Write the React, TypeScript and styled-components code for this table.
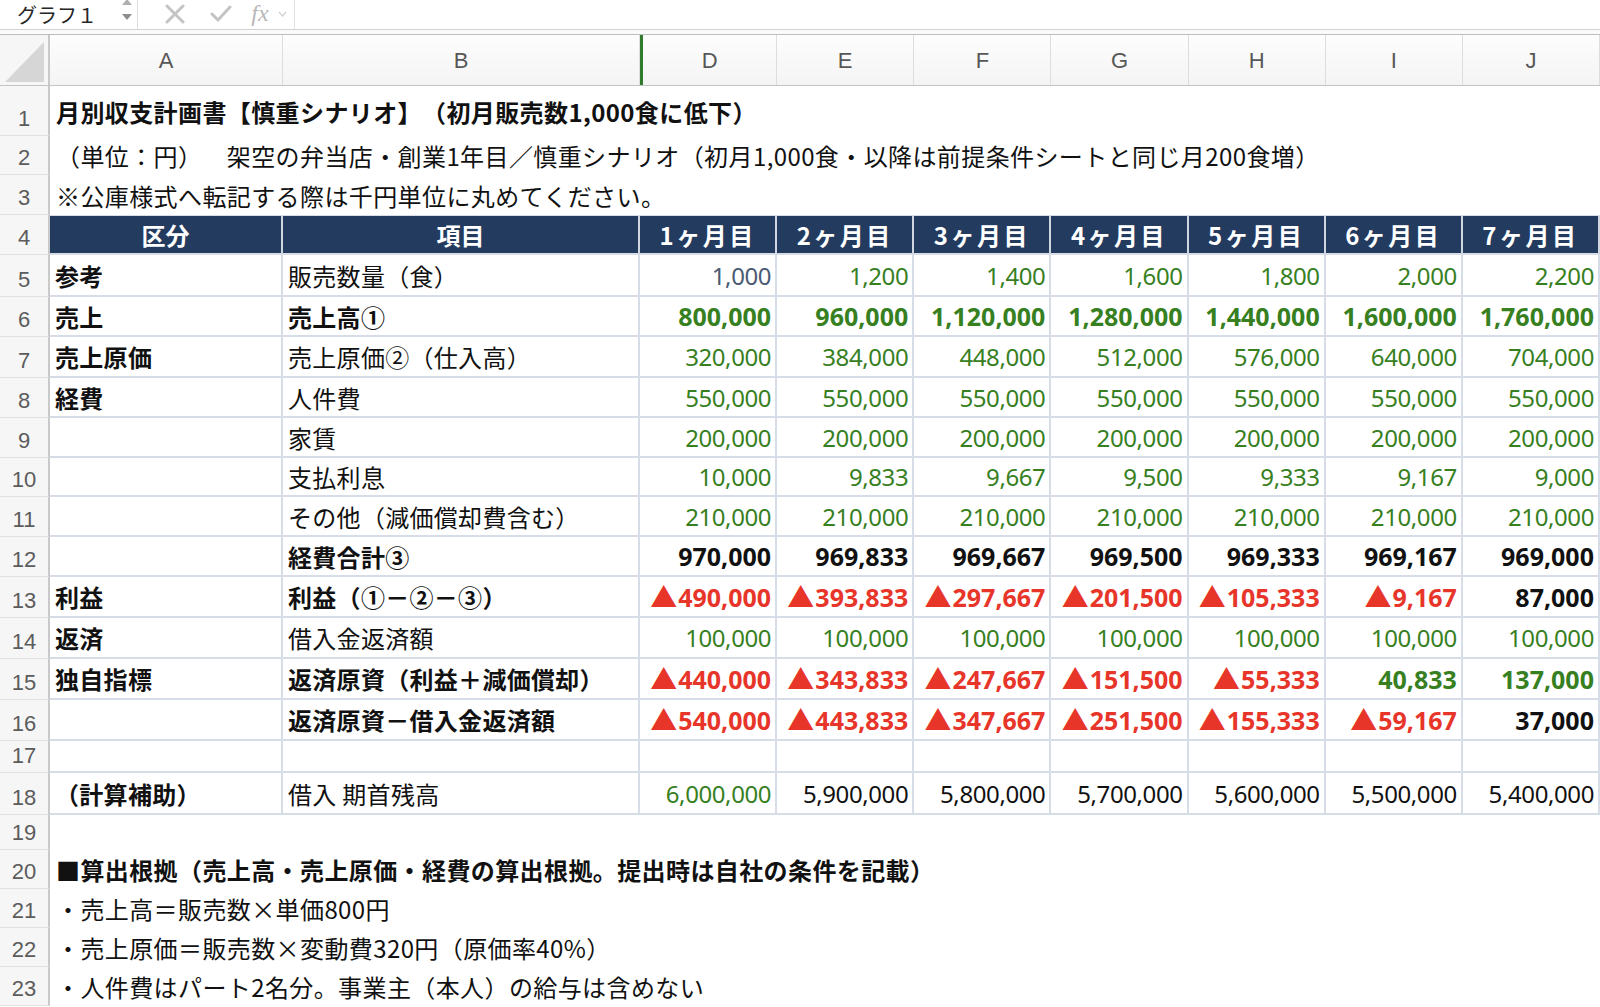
import React from "react";
import styled, { createGlobalStyle } from "styled-components";

const COLS = "50px 233px 357px repeat(7, minmax(0, 1fr))";
const NAVY = "#233b5f";
const GRID = "#d6dde7";

const tones: Record<string, string> = {
  g: "#37801f",
  r: "#e8352a",
  k: "#111111",
  s: "#4a5a72",
};

const GlobalStyle = createGlobalStyle`
  html, body { margin: 0; padding: 0; background: #ffffff; overflow: hidden; }
  body {
    font-family: "Noto Sans CJK JP", "Noto Sans", sans-serif;
    color: #111;
    text-spacing-trim: space-all;
  }
  * { box-sizing: border-box; }
`;

const Page = styled.div`
  width: 1600px;
  height: 1007px;
  overflow: hidden;
  background: #ffffff;
`;

/* ---------- formula bar ---------- */
const FormulaBar = styled.div`
  height: 29px;
  display: flex;
  align-items: stretch;
  background: #ffffff;
`;

const NameBox = styled.div`
  width: 138px;
  display: flex;
  align-items: center;
  justify-content: space-between;
  padding: 0 3px 0 17px;
  border-right: 1px solid #dedede;
  font-size: 20px;
  line-height: 29px;
  color: #262626;
`;

const Spinner = styled.svg`
  display: block;
  align-self: stretch;
`;

const Tools = styled.div`
  display: flex;
  align-items: center;
  padding: 0 0 2px 14px;
  width: 157px;
  border-right: 1px solid #e2e2e2;
`;

const ToolIcon = styled.span<{ $w: number }>`
  width: ${(p) => p.$w}px;
  display: flex;
  align-items: center;
  justify-content: center;
`;

const Fx = styled.span`
  font-family: "Liberation Serif", "DejaVu Serif", serif;
  font-style: italic;
  font-size: 24px;
  color: #b8b8b8;
  width: 32px;
  text-align: center;
  line-height: 27px;
`;

const FormulaInput = styled.div`
  flex: 1;
  background: #ffffff;
`;

const Divider = styled.div`
  height: 6px;
  border-top: 1px solid #d2d2d2;
  border-bottom: 1px solid #bdbdbd;
  background: #fbfbfb;
`;

/* ---------- sheet ---------- */
const Sheet = styled.div`
  display: flex;
  flex-direction: column;
`;

const Row = styled.div<{ $h: number }>`
  display: grid;
  grid-template-columns: ${COLS};
  height: ${(p) => p.$h}px;
`;

const HeaderRow = styled(Row)`
  border-bottom: 1px solid #c4c4c4;
  background: linear-gradient(#fdfdfd, #f4f4f4);
`;

const Corner = styled.div`
  border-right: 2px solid #c9c9c9;
  background: #f6f6f6;
  display: flex;
  align-items: flex-end;
  justify-content: flex-end;
  padding: 0 4px 3px 0;
`;

const ColHead = styled.div<{ $mark?: boolean }>`
  display: flex;
  align-items: center;
  justify-content: center;
  font-family: "Liberation Sans", Arial, sans-serif;
  font-size: 22px;
  color: #575757;
  border-right: 1px solid #dddddd;
  border-left: ${(p) => (p.$mark ? "3px solid #2f7d2c" : "0")};
  padding-top: 2px;
`;

const RowNum = styled.div`
  display: flex;
  align-items: flex-end;
  justify-content: center;
  padding-bottom: 5px;
  font-family: "Liberation Sans", Arial, sans-serif;
  font-size: 22px;
  line-height: 1;
  color: #5c5c5c;
  background: #f6f6f6;
  border-right: 2px solid #c9c9c9;
  border-bottom: 1px solid #e0e0e0;
`;

const NoteCell = styled.div<{ $bold?: boolean }>`
  grid-column: 2 / -1;
  display: flex;
  align-items: center;
  padding-left: 6px;
  font-size: 24px;
  letter-spacing: 0.4px;
  font-weight: ${(p) => (p.$bold ? 700 : 400)};
  white-space: nowrap;
  color: #111;
`;

const GridCell = styled.div`
  display: flex;
  align-items: center;
  font-size: 24px;
  white-space: nowrap;
  overflow: hidden;
  border-right: 2px solid ${GRID};
  border-bottom: 2px solid ${GRID};
`;

const HeadCell = styled(GridCell)<{ $spaced?: boolean }>`
  justify-content: center;
  background: ${NAVY};
  color: #ffffff;
  font-weight: 700;
  border-top: 1px solid ${GRID};
  border-right-color: #cfd6e0;
  letter-spacing: ${(p) => (p.$spaced ? "2.5px" : "0")};
`;

const LabelCell = styled(GridCell)<{ $bold?: boolean }>`
  padding-left: 5px;
  letter-spacing: 0.3px;
  font-weight: ${(p) => (p.$bold ? 700 : 400)};
  color: #111;
`;

const NumCell = styled(GridCell)<{ $tone: string; $bold?: boolean }>`
  justify-content: flex-end;
  padding-right: 4px;
  font-family: "Noto Sans", "Noto Sans CJK JP", sans-serif;
  font-weight: ${(p) => (p.$bold ? 700 : 400)};
  font-size: ${(p) => (p.$bold ? "25px" : "24px")};
  letter-spacing: ${(p) => (p.$bold ? "0" : "-0.4px")};
  color: ${(p) => tones[p.$tone] || "#111"};
`;

const Tri = styled.span`
  font-family: "Noto Sans CJK JP", sans-serif;
  font-size: 27px;
  line-height: 1;
  margin-right: 1px;
`;

/* ---------- data ---------- */
type V = { t: string; c: string; b?: boolean };
const g = (t: string): V => ({ t, c: "g" });
const G = (t: string): V => ({ t, c: "g", b: true });
const R = (t: string): V => ({ t, c: "r", b: true });
const k = (t: string): V => ({ t, c: "k" });
const K = (t: string): V => ({ t, c: "k", b: true });
const s = (t: string): V => ({ t, c: "s" });
const rep = (f: (t: string) => V, t: string) => Array.from({ length: 7 }, () => f(t));

type DataRow = { n: number; h: number; a: string; b: string; bb?: boolean; v: V[] };

const dataRows: DataRow[] = [
  { n: 5, h: 42, a: "参考", b: "販売数量（食）", v: [s("1,000"), ...["1,200", "1,400", "1,600", "1,800", "2,000", "2,200"].map(g)] },
  { n: 6, h: 40, a: "売上", b: "売上高①", bb: true, v: ["800,000", "960,000", "1,120,000", "1,280,000", "1,440,000", "1,600,000", "1,760,000"].map(G) },
  { n: 7, h: 41, a: "売上原価", b: "売上原価②（仕入高）", v: ["320,000", "384,000", "448,000", "512,000", "576,000", "640,000", "704,000"].map(g) },
  { n: 8, h: 40, a: "経費", b: "人件費", v: rep(g, "550,000") },
  { n: 9, h: 40, a: "", b: "家賃", v: rep(g, "200,000") },
  { n: 10, h: 39, a: "", b: "支払利息", v: ["10,000", "9,833", "9,667", "9,500", "9,333", "9,167", "9,000"].map(g) },
  { n: 11, h: 40, a: "", b: "その他（減価償却費含む）", v: rep(g, "210,000") },
  { n: 12, h: 40, a: "", b: "経費合計③", bb: true, v: ["970,000", "969,833", "969,667", "969,500", "969,333", "969,167", "969,000"].map(K) },
  { n: 13, h: 41, a: "利益", b: "利益（①－②－③）", bb: true, v: [...["▲490,000", "▲393,833", "▲297,667", "▲201,500", "▲105,333", "▲9,167"].map(R), K("87,000")] },
  { n: 14, h: 41, a: "返済", b: "借入金返済額", v: rep(g, "100,000") },
  { n: 15, h: 41, a: "独自指標", b: "返済原資（利益＋減価償却）", bb: true, v: [...["▲440,000", "▲343,833", "▲247,667", "▲151,500", "▲55,333"].map(R), G("40,833"), G("137,000")] },
  { n: 16, h: 41, a: "", b: "返済原資－借入金返済額", bb: true, v: [...["▲540,000", "▲443,833", "▲347,667", "▲251,500", "▲155,333", "▲59,167"].map(R), K("37,000")] },
  { n: 17, h: 32, a: "", b: "", v: rep(k, "") },
  { n: 18, h: 42, a: "（計算補助）", b: "借入 期首残高", v: [g("6,000,000"), ...["5,900,000", "5,800,000", "5,700,000", "5,600,000", "5,500,000", "5,400,000"].map(k)] },
];

const topNotes = [
  { n: 1, h: 50, t: "月別収支計画書【慎重シナリオ】（初月販売数1,000食に低下）", b: true },
  { n: 2, h: 39, t: "（単位：円）　架空の弁当店・創業1年目／慎重シナリオ（初月1,000食・以降は前提条件シートと同じ月200食増）" },
  { n: 3, h: 40, t: "※公庫様式へ転記する際は千円単位に丸めてください。" },
];

const bottomNotes = [
  { n: 19, h: 35, t: "" },
  { n: 20, h: 39, t: "■算出根拠（売上高・売上原価・経費の算出根拠。提出時は自社の条件を記載）", b: true },
  { n: 21, h: 39, t: "・売上高＝販売数×単価800円" },
  { n: 22, h: 39, t: "・売上原価＝販売数×変動費320円（原価率40%）" },
  { n: 23, h: 39, t: "・人件費はパート2名分。事業主（本人）の給与は含めない" },
];

const months = ["1ヶ月目", "2ヶ月目", "3ヶ月目", "4ヶ月目", "5ヶ月目", "6ヶ月目", "7ヶ月目"];
const letters = ["A", "B", "D", "E", "F", "G", "H", "I", "J"];

const NumText: React.FC<{ t: string }> = ({ t }) =>
  t.startsWith("▲") ? (
    <>
      <Tri>▲</Tri>
      {t.slice(1)}
    </>
  ) : (
    <>{t}</>
  );

export default function App() {
  return (
    <Page>
      <GlobalStyle />
      <FormulaBar>
        <NameBox>
          <span>グラフ１</span>
          <Spinner width="14" height="29" viewBox="0 0 14 29">
            <polygon points="2,5 12,5 7,-1" fill="#b0b0b0" />
            <polygon points="2,14 12,14 7,20" fill="#8e8e8e" />
          </Spinner>
        </NameBox>
        <Tools>
          <ToolIcon $w={46}>
            <svg width="20" height="20" viewBox="0 0 20 20">
              <path d="M2 2 L18 18 M18 2 L2 18" stroke="#c4c4c4" strokeWidth="3" strokeLinecap="round" />
            </svg>
          </ToolIcon>
          <ToolIcon $w={46}>
            <svg width="22" height="18" viewBox="0 0 22 18">
              <path d="M2 9 L8 15 L20 2" stroke="#c4c4c4" strokeWidth="3" fill="none" strokeLinecap="round" strokeLinejoin="round" />
            </svg>
          </ToolIcon>
          <Fx>fx</Fx>
          <ToolIcon $w={12}>
            <svg width="9" height="6" viewBox="0 0 9 6">
              <path d="M1 1 L4.5 5 L8 1" stroke="#d0d0d0" strokeWidth="1.2" fill="none" />
            </svg>
          </ToolIcon>
        </Tools>
        <FormulaInput />
      </FormulaBar>
      <Divider />
      <Sheet>
        <HeaderRow $h={51}>
          <Corner>
            <svg width="39" height="40" viewBox="0 0 39 40">
              <polygon points="39,0 39,40 0,40" fill="#d6d6d6" />
            </svg>
          </Corner>
          {letters.map((l) => (
            <ColHead key={l} $mark={l === "D"}>
              {l}
            </ColHead>
          ))}
        </HeaderRow>

        {topNotes.map((r) => (
          <Row key={r.n} $h={r.h}>
            <RowNum>{r.n}</RowNum>
            <NoteCell $bold={r.b}>{r.t}</NoteCell>
          </Row>
        ))}

        <Row $h={40}>
          <RowNum>4</RowNum>
          <HeadCell>区分</HeadCell>
          <HeadCell>項目</HeadCell>
          {months.map((m) => (
            <HeadCell key={m} $spaced>
              {m}
            </HeadCell>
          ))}
        </Row>

        {dataRows.map((r) => (
          <Row key={r.n} $h={r.h}>
            <RowNum>{r.n}</RowNum>
            <LabelCell $bold>{r.a}</LabelCell>
            <LabelCell $bold={r.bb}>{r.b}</LabelCell>
            {r.v.map((v, i) => (
              <NumCell key={i} $tone={v.c} $bold={v.b}>
                <NumText t={v.t} />
              </NumCell>
            ))}
          </Row>
        ))}

        {bottomNotes.map((r) => (
          <Row key={r.n} $h={r.h}>
            <RowNum>{r.n}</RowNum>
            <NoteCell $bold={r.b}>{r.t}</NoteCell>
          </Row>
        ))}
      </Sheet>
    </Page>
  );
}
